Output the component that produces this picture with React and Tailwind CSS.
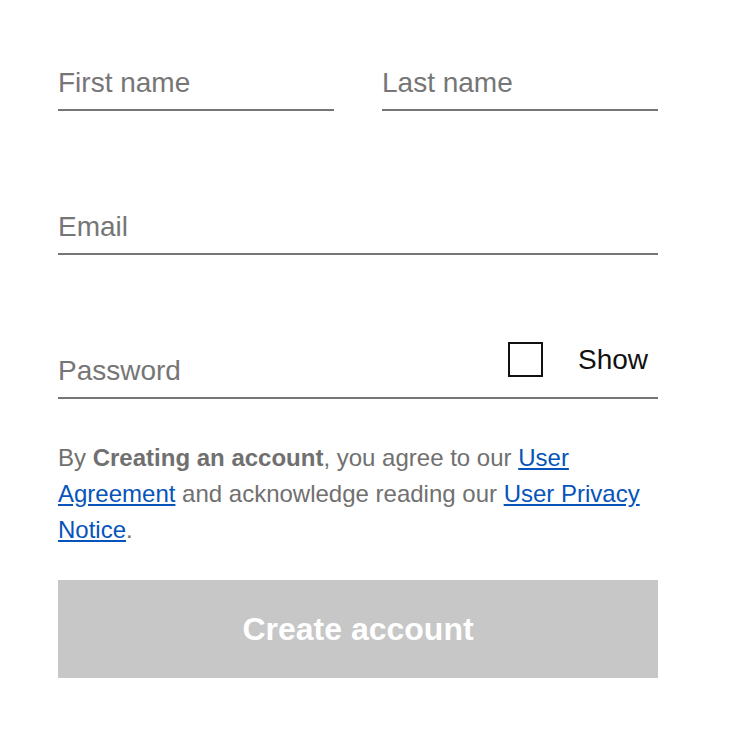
import React, { useState } from 'react';

const Field = ({ label, className = '' }) => (
  <div className={`border-b-2 border-[#767676] pb-[10px] ${className}`}>
    <span className="block text-[28px] leading-[32px] text-[#767676]">{label}</span>
  </div>
);

const App = () => {
  const [show, setShow] = useState(false);

  return (
    <div className="min-h-screen bg-white font-['Liberation_Sans',Arial,sans-serif]">
      <div className="w-[600px] ml-[58px] pt-[67px]">
        {/* Name row */}
        <div className="flex gap-[48px]">
          <Field label="First name" className="flex-1" />
          <Field label="Last name" className="flex-1" />
        </div>

        <Field label="Email" className="mt-[100px]" />

        {/* Password */}
        <div className="mt-[100px] border-b-2 border-[#767676] pb-[10px]">
          <div className="h-[32px] flex items-start justify-between">
            <span className="block text-[28px] leading-[32px] text-[#767676]">Password</span>
            <label className="-mt-[13px] flex items-center mr-[10px] cursor-pointer">
              <button
                type="button"
                onClick={() => setShow(!show)}
                className="w-[35px] h-[35px] border-2 border-[#111111] bg-white"
              />
              <span className="ml-[35px] text-[28px] leading-[32px] text-[#111111]">Show</span>
            </label>
          </div>
        </div>

        {/* Legal */}
        <p className="mt-[41px] text-[24px] leading-[36px] text-[#707070]">
          By <b className="font-bold">Creating an account</b>, you agree to our{' '}
          <a href="#" className="text-[#0654ba] underline">User Agreement</a> and acknowledge reading our{' '}
          <a href="#" className="text-[#0654ba] underline">User Privacy Notice</a>.
        </p>

        <button
          type="button"
          disabled
          className="mt-[32px] w-full h-[98px] bg-[#c7c7c7] text-white text-[32px] font-bold"
        >
          Create account
        </button>
      </div>
    </div>
  );
};

export default App;
